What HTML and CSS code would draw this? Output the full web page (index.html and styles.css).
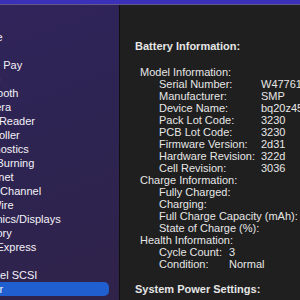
FILE: index.html
```html
<!DOCTYPE html>
<html lang="en">
<head>
  <meta charset="UTF-8">
  <title>System Information - Power</title>
  <link rel="stylesheet" href="styles.css">
</head>
<body>
  <div class="window">
    <div class="titlebar"></div>
    <div class="main">
      <!-- Sidebar (scrolled, left part clipped) -->
      <div class="sidebar">
        <div class="item head">Hardware</div>
        <div class="item">ATA</div>
        <div class="item">Apple Pay</div>
        <div class="item">Audio</div>
        <div class="item">Bluetooth</div>
        <div class="item">Camera</div>
        <div class="item">Card Reader</div>
        <div class="item">Controller</div>
        <div class="item">Diagnostics</div>
        <div class="item">Disc Burning</div>
        <div class="item">Ethernet</div>
        <div class="item">Fibre Channel</div>
        <div class="item">FireWire</div>
        <div class="item">Graphics/Displays</div>
        <div class="item">Memory</div>
        <div class="item">NVMExpress</div>
        <div class="item">PCI</div>
        <div class="item">Parallel SCSI</div>
        <div class="item selected">Power</div>
        <div class="item">Printers</div>
      </div>

      <!-- Detail pane -->
      <div class="detail">
        <div class="title">Battery Information:</div>

        <div class="group">Model Information:</div>
        <div class="row model"><span class="label">Serial Number:</span><span>W47761</span></div>
        <div class="row model"><span class="label">Manufacturer:</span><span>SMP</span></div>
        <div class="row model"><span class="label">Device Name:</span><span>bq20z451</span></div>
        <div class="row model"><span class="label">Pack Lot Code:</span><span>3230</span></div>
        <div class="row model"><span class="label">PCB Lot Code:</span><span>3230</span></div>
        <div class="row model"><span class="label">Firmware Version:</span><span>2d31</span></div>
        <div class="row model"><span class="label">Hardware Revision:</span><span>322d</span></div>
        <div class="row model"><span class="label">Cell Revision:</span><span>3036</span></div>

        <div class="group">Charge Information:</div>
        <div class="row charge"><span class="label">Fully Charged:</span><span>Yes</span></div>
        <div class="row charge"><span class="label">Charging:</span><span>No</span></div>
        <div class="row charge"><span class="label">Full Charge Capacity (mAh):</span><span>5770</span></div>
        <div class="row charge"><span class="label">State of Charge (%):</span><span>100</span></div>

        <div class="group">Health Information:</div>
        <div class="row health"><span class="label">Cycle Count:</span><span>3</span></div>
        <div class="row health"><span class="label">Condition:</span><span>Normal</span></div>

        <div class="title second">System Power Settings:</div>
      </div>
    </div>
  </div>
</body>
</html>
```

FILE: styles.css
```css
/* Basic styling */
html, body {
  margin: 0;
  height: 100%;
  overflow: hidden;
}

body {
  font-family: "Liberation Sans", Arial, sans-serif;
  font-size: 11px;
  background: #1e1e1e;
}

.window {
  display: flex;
  flex-direction: column;
  height: 300px;
}

.titlebar {
  height: 4px;
  background: #3b30b8;
  border-bottom: 1px solid #62588c;
  flex-shrink: 0;
}

.main {
  display: flex;
  flex: 1;
  min-height: 0;
}

/* Sidebar */
.sidebar {
  width: 120px;
  flex-shrink: 0;
  overflow: hidden;
  padding-top: 25px;
  box-sizing: border-box;
  background: linear-gradient(160deg, #30245a 0%, #2d2452 45%, #30234a 100%);
  border-right: 1px solid #0f0f10;
  color: #f4f2f7;
}

.item {
  height: 14px;
  line-height: 14px;
  margin-left: -28px;
  white-space: nowrap;
}

.item.head {
  margin-left: -45px;
}

.item.selected {
  margin-left: 0;
  margin-right: 10px;
  text-indent: -28px;
  background: #1f5fd0;
  border-radius: 0 5px 5px 0;
  overflow: hidden;
}

/* Detail pane */
.detail {
  flex: 1;
  padding: 35px 0 0 15px;
  color: #e6e6e6;
  background: #1f1f1f;
  white-space: nowrap;
  overflow: hidden;
}

.title {
  font-weight: bold;
  line-height: 12px;
  margin-bottom: 14px;
}

.title.second {
  margin-top: 13px;
}

.group,
.row {
  line-height: 12px;
  height: 12px;
}

.group {
  padding-left: 5px;
}

.row {
  display: flex;
  padding-left: 24px;
}

.model .label {
  width: 102px;
  flex-shrink: 0;
}

.charge .label {
  width: 170px;
  flex-shrink: 0;
}

.health .label {
  width: 70px;
  flex-shrink: 0;
}
```
